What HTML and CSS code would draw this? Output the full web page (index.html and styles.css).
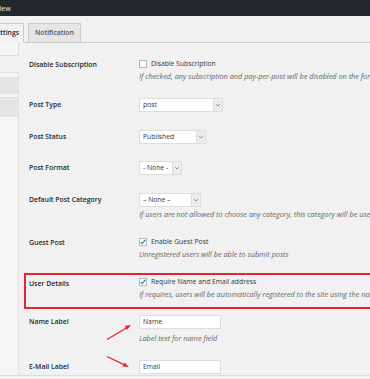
FILE: index.html
```html
<!DOCTYPE html>
<html lang="en">
<head>
<meta charset="utf-8">
<title>Settings</title>
<link rel="stylesheet" href="styles.css">
</head>
<body>
<div class="page">
  <header class="topbar"><span class="topbar-title">New</span></header>
  <nav class="tabs">
    <span class="tab tab-active">Settings</span>
    <span class="tab">Notification</span>
  </nav>
  <div class="layout">
    <aside class="sidebar">
      <div class="side-top"></div>
      <div class="side-menu">
        <div class="side-item"></div>
        <div class="side-item side-item-tall"></div>
      </div>
    </aside>
    <main class="form">
      <div class="row">
        <div class="label label-check">Disable Subscription</div>
        <div class="field">
          <label class="check"><span class="box"></span>Disable Subscription</label>
          <p class="desc">If checked, any subscription and pay-per-post will be disabled on the form and will take default post type and status</p>
        </div>
      </div>
      <div class="row">
        <div class="label label-select">Post Type</div>
        <div class="field">
          <div class="select select-post"><span class="select-value">post</span><span class="select-arrow"><svg width="8" height="12" viewBox="0 0 8 12"><path d="M2.2 5.2 L4 7 L5.8 5.2" fill="none" stroke="#777" stroke-width="0.8"/></svg></span></div>
        </div>
      </div>
      <div class="row">
        <div class="label label-select">Post Status</div>
        <div class="field">
          <div class="select select-status"><span class="select-value">Published</span><span class="select-arrow"><svg width="8" height="12" viewBox="0 0 8 12"><path d="M2.2 5.2 L4 7 L5.8 5.2" fill="none" stroke="#777" stroke-width="0.8"/></svg></span></div>
        </div>
      </div>
      <div class="row">
        <div class="label label-select">Post Format</div>
        <div class="field">
          <div class="select select-format"><span class="select-value">- None -</span><span class="select-arrow"><svg width="8" height="12" viewBox="0 0 8 12"><path d="M2.2 5.2 L4 7 L5.8 5.2" fill="none" stroke="#777" stroke-width="0.8"/></svg></span></div>
        </div>
      </div>
      <div class="row">
        <div class="label label-select">Default Post Category</div>
        <div class="field">
          <div class="select select-cat"><span class="select-value">&ndash; None &ndash;</span><span class="select-arrow"><svg width="8" height="12" viewBox="0 0 8 12"><path d="M2.2 5.2 L4 7 L5.8 5.2" fill="none" stroke="#777" stroke-width="0.8"/></svg></span></div>
          <p class="desc desc-select">If users are not allowed to choose any category, this category will be used instead</p>
        </div>
      </div>
      <div class="row">
        <div class="label label-check">Guest Post</div>
        <div class="field">
          <label class="check"><span class="box"><svg width="6" height="6" viewBox="0 0 6 6"><path d="M0.8 3.1 L2.3 4.6 L5.4 0.9" fill="none" stroke="#1e8cbe" stroke-width="1.3"/></svg></span>Enable Guest Post</label>
          <p class="desc">Unregistered users will be able to submit posts</p>
        </div>
      </div>
      <div class="row row-highlight">
        <div class="label label-check">User Details</div>
        <div class="field">
          <label class="check"><span class="box"><svg width="6" height="6" viewBox="0 0 6 6"><path d="M0.8 3.1 L2.3 4.6 L5.4 0.9" fill="none" stroke="#1e8cbe" stroke-width="1.3"/></svg></span>Require Name and Email address</label>
          <p class="desc">If requires, users will be automatically registered to the site using the name and email address</p>
        </div>
      </div>
      <div class="row">
        <div class="label label-select">Name Label</div>
        <div class="field">
          <div class="input">Name</div>
          <p class="desc desc-input">Label text for name field</p>
        </div>
      </div>
      <div class="row">
        <div class="label label-select">E-Mail Label</div>
        <div class="field">
          <div class="input">Email</div>
        </div>
      </div>
    </main>
  </div>
  <div class="footer"></div>
  <svg class="annot" width="370" height="379" viewBox="0 0 370 379">
    <line x1="107" y1="339.5" x2="126" y2="328.2" stroke="#e2262c" stroke-width="1.3"/>
    <polygon points="131,325 126.9,329.9 124.7,326.1" fill="#e2262c"/>
    <line x1="107" y1="356.5" x2="124.5" y2="364.8" stroke="#e2262c" stroke-width="1.3"/>
    <polygon points="129,367 122.65,366.4 124.55,362.4" fill="#e2262c"/>
  </svg>
</div>
</body>
</html>
```
FILE: styles.css
```css
* { box-sizing: border-box; }
html, body { margin: 0; padding: 0; }
body {
  width: 370px;
  height: 379px;
  overflow: hidden;
  background: #f1f1f1;
  font-family: "Open Sans", "Noto Sans", sans-serif;
  color: #444;
}
.page {
  position: relative;
  width: 370px;
  height: 379px;
  overflow: hidden;
}
.topbar {
  height: 16px;
  background: #23282d;
  color: #eee;
  font-size: 7px;
  line-height: 17px;
  white-space: nowrap;
}
.topbar-title { display: inline-block; margin-left: -4px; }

.tabs {
  display: flex;
  align-items: flex-end;
  height: 27px;
  padding-top: 7px;
  border-bottom: 1px solid #ccc;
}
.tab {
  height: 20px;
  margin-bottom: -1px;
  border: 1px solid #ccc;
  background: #e5e5e5;
  color: #555;
  font-size: 6.8px;
  font-weight: 600;
  line-height: 18px;
  padding: 0 6px;
  white-space: nowrap;
}
.tab-active {
  width: 41px;
  margin-left: -17px;
  border-bottom-color: #f1f1f1;
  background: #f1f1f1;
  color: #23282d;
  text-align: right;
  padding: 0 4px 0 0;
}
.tab + .tab { margin-left: 4px; }

.layout {
  display: flex;
  height: 332px;
  overflow: hidden;
}
.sidebar { flex: 0 0 19px; }
.side-top {
  height: 13px;
  border-right: 1px solid #ddd;
  border-bottom: 1px solid #ddd;
  background: #f6f6f6;
}
.side-menu {
  margin-top: 16px;
  height: 330px;
  border-top: 1px solid #e2e2e2;
  border-right: 1px solid #e2e2e2;
  background: #f6f6f6;
  padding-top: 4px;
}
.side-item {
  height: 17px;
  margin-bottom: 3px;
  background: #e4e4e4;
}
.side-item-tall { height: 20px; }

.form {
  flex: 0 0 auto;
  width: 440px;
  padding: 7px 0 0 10px;
}
.row {
  display: grid;
  grid-template-columns: 110px 1fr;
  padding: 8.75px 0;
}
.row-highlight {
  margin: 5.5px 0 -2.75px -5px;
  padding: 2px 0 8px 3px;
  border: 2px solid #e3262d;
}
.label {
  font-size: 6.9px;
  font-weight: 600;
  color: #23282d;
  line-height: 10px;
  white-space: nowrap;
}
.label-check { margin-top: 1.5px; }
.label-select { margin-top: 2px; }
.field {
  font-size: 6.8px;
  color: #32373c;
  white-space: nowrap;
}
.check {
  display: flex;
  align-items: center;
  gap: 4px;
  height: 10px;
  line-height: 10px;
}
.box {
  display: inline-flex;
  align-items: center;
  justify-content: center;
  width: 8px;
  height: 8px;
  border: 1px solid #b4b9be;
  background: #fff;
}
.desc {
  margin: 3px 0 0;
  font-style: italic;
  color: #666;
  font-size: 7.3px;
  line-height: 9px;
}
.desc-select { margin-top: 3.5px; }
.desc-input { margin-top: 4.5px; }
.select {
  display: flex;
  height: 14px;
  border: 1px solid #ddd;
  background: #fff;
  line-height: 12px;
}
.select-value {
  flex: 1;
  padding-left: 3px;
}
.select-arrow {
  display: flex;
  align-items: center;
  justify-content: center;
  width: 9px;
  border-left: 1px solid #ddd;
  background: #ececec;
}
.select-post { width: 84px; }
.select-status { width: 67px; }
.select-format { width: 43px; }
.select-cat { width: 62px; }
.input {
  width: 82px;
  height: 14px;
  border: 1px solid #ddd;
  background: #fff;
  line-height: 12px;
  padding-left: 3px;
}
.footer {
  height: 4px;
  border-top: 1px solid #ddd;
  background: #f1f1f1;
}
.annot {
  position: absolute;
  top: 0;
  left: 0;
  pointer-events: none;
}
```
